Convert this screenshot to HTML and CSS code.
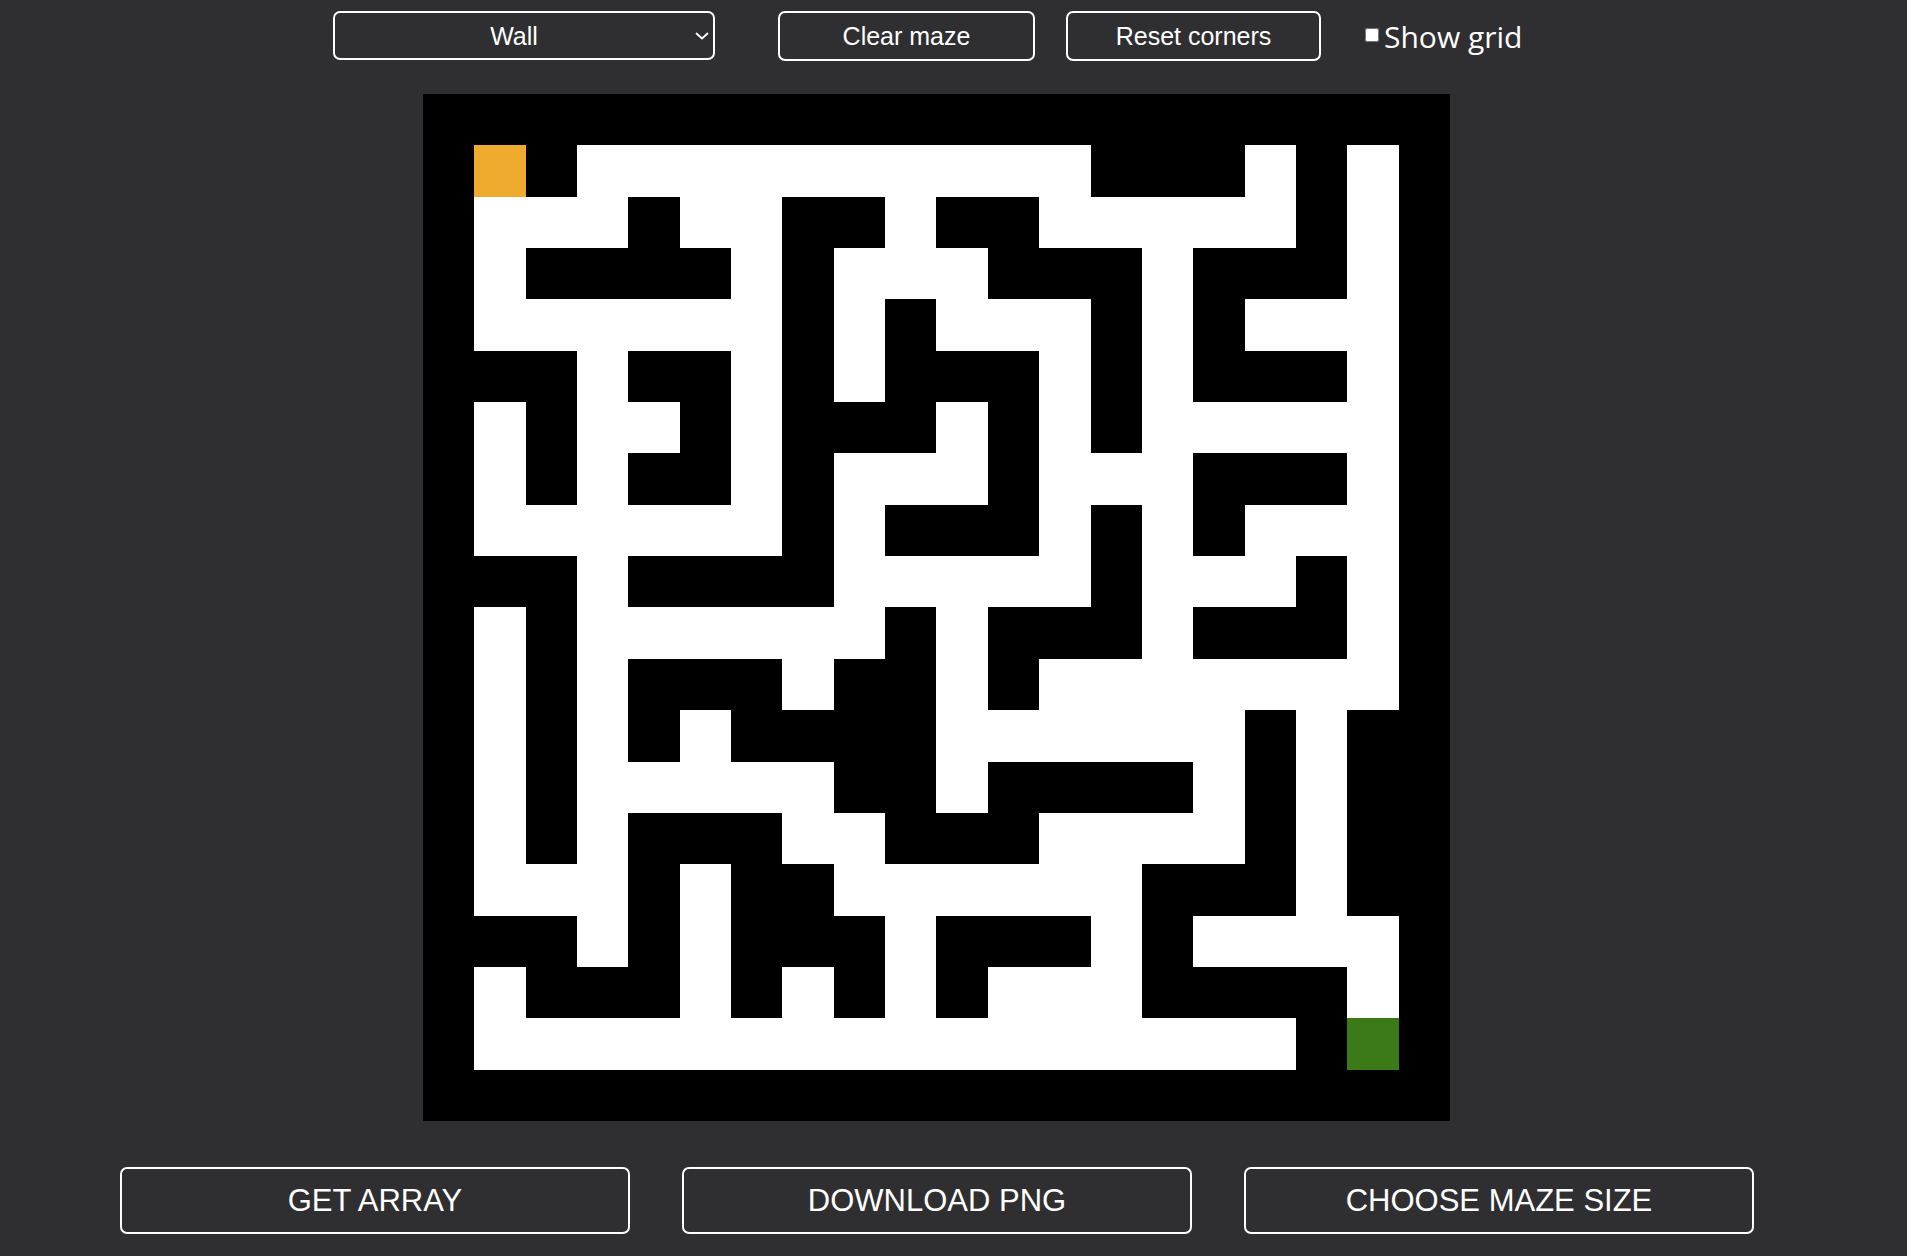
FILE: index.html
```html
<!DOCTYPE html>
<html lang="en">
<head>
<meta charset="utf-8">
<title>Maze editor</title>
<link rel="stylesheet" href="styles.css">
</head>
<body>
<div class="toolbar">
  <div class="select-wrap">
    <select class="mode-select">
      <option>Wall</option>
      <option>Path</option>
      <option>Start</option>
      <option>End</option>
    </select>
    <svg class="select-arrow" width="14" height="8" viewBox="0 0 14 8" aria-hidden="true"><path d="M1.5 1.5 L7 6.5 L12.5 1.5" fill="none" stroke="#ffffff" stroke-width="1.8" stroke-linecap="round" stroke-linejoin="round"/></svg>
  </div>
  <button class="top-btn clear-btn">Clear maze</button>
  <button class="top-btn reset-btn">Reset corners</button>
  <label class="grid-toggle"><input type="checkbox" class="grid-check">Show grid</label>
</div>

<div class="maze">
  <!-- row 0 -->
  <i class="w"></i><i class="w"></i><i class="w"></i><i class="w"></i><i class="w"></i><i class="w"></i><i class="w"></i><i class="w"></i><i class="w"></i><i class="w"></i><i class="w"></i><i class="w"></i><i class="w"></i><i class="w"></i><i class="w"></i><i class="w"></i><i class="w"></i><i class="w"></i><i class="w"></i><i class="w"></i>
  <!-- row 1 -->
  <i class="w"></i><i class="s"></i><i class="w"></i><i class="p"></i><i class="p"></i><i class="p"></i><i class="p"></i><i class="p"></i><i class="p"></i><i class="p"></i><i class="p"></i><i class="p"></i><i class="p"></i><i class="w"></i><i class="w"></i><i class="w"></i><i class="p"></i><i class="w"></i><i class="p"></i><i class="w"></i>
  <!-- row 2 -->
  <i class="w"></i><i class="p"></i><i class="p"></i><i class="p"></i><i class="w"></i><i class="p"></i><i class="p"></i><i class="w"></i><i class="w"></i><i class="p"></i><i class="w"></i><i class="w"></i><i class="p"></i><i class="p"></i><i class="p"></i><i class="p"></i><i class="p"></i><i class="w"></i><i class="p"></i><i class="w"></i>
  <!-- row 3 -->
  <i class="w"></i><i class="p"></i><i class="w"></i><i class="w"></i><i class="w"></i><i class="w"></i><i class="p"></i><i class="w"></i><i class="p"></i><i class="p"></i><i class="p"></i><i class="w"></i><i class="w"></i><i class="w"></i><i class="p"></i><i class="w"></i><i class="w"></i><i class="w"></i><i class="p"></i><i class="w"></i>
  <!-- row 4 -->
  <i class="w"></i><i class="p"></i><i class="p"></i><i class="p"></i><i class="p"></i><i class="p"></i><i class="p"></i><i class="w"></i><i class="p"></i><i class="w"></i><i class="p"></i><i class="p"></i><i class="p"></i><i class="w"></i><i class="p"></i><i class="w"></i><i class="p"></i><i class="p"></i><i class="p"></i><i class="w"></i>
  <!-- row 5 -->
  <i class="w"></i><i class="w"></i><i class="w"></i><i class="p"></i><i class="w"></i><i class="w"></i><i class="p"></i><i class="w"></i><i class="p"></i><i class="w"></i><i class="w"></i><i class="w"></i><i class="p"></i><i class="w"></i><i class="p"></i><i class="w"></i><i class="w"></i><i class="w"></i><i class="p"></i><i class="w"></i>
  <!-- row 6 -->
  <i class="w"></i><i class="p"></i><i class="w"></i><i class="p"></i><i class="p"></i><i class="w"></i><i class="p"></i><i class="w"></i><i class="w"></i><i class="w"></i><i class="p"></i><i class="w"></i><i class="p"></i><i class="w"></i><i class="p"></i><i class="p"></i><i class="p"></i><i class="p"></i><i class="p"></i><i class="w"></i>
  <!-- row 7 -->
  <i class="w"></i><i class="p"></i><i class="w"></i><i class="p"></i><i class="w"></i><i class="w"></i><i class="p"></i><i class="w"></i><i class="p"></i><i class="p"></i><i class="p"></i><i class="w"></i><i class="p"></i><i class="p"></i><i class="p"></i><i class="w"></i><i class="w"></i><i class="w"></i><i class="p"></i><i class="w"></i>
  <!-- row 8 -->
  <i class="w"></i><i class="p"></i><i class="p"></i><i class="p"></i><i class="p"></i><i class="p"></i><i class="p"></i><i class="w"></i><i class="p"></i><i class="w"></i><i class="w"></i><i class="w"></i><i class="p"></i><i class="w"></i><i class="p"></i><i class="w"></i><i class="p"></i><i class="p"></i><i class="p"></i><i class="w"></i>
  <!-- row 9 -->
  <i class="w"></i><i class="w"></i><i class="w"></i><i class="p"></i><i class="w"></i><i class="w"></i><i class="w"></i><i class="w"></i><i class="p"></i><i class="p"></i><i class="p"></i><i class="p"></i><i class="p"></i><i class="w"></i><i class="p"></i><i class="p"></i><i class="p"></i><i class="w"></i><i class="p"></i><i class="w"></i>
  <!-- row 10 -->
  <i class="w"></i><i class="p"></i><i class="w"></i><i class="p"></i><i class="p"></i><i class="p"></i><i class="p"></i><i class="p"></i><i class="p"></i><i class="w"></i><i class="p"></i><i class="w"></i><i class="w"></i><i class="w"></i><i class="p"></i><i class="w"></i><i class="w"></i><i class="w"></i><i class="p"></i><i class="w"></i>
  <!-- row 11 -->
  <i class="w"></i><i class="p"></i><i class="w"></i><i class="p"></i><i class="w"></i><i class="w"></i><i class="w"></i><i class="p"></i><i class="w"></i><i class="w"></i><i class="p"></i><i class="w"></i><i class="p"></i><i class="p"></i><i class="p"></i><i class="p"></i><i class="p"></i><i class="p"></i><i class="p"></i><i class="w"></i>
  <!-- row 12 -->
  <i class="w"></i><i class="p"></i><i class="w"></i><i class="p"></i><i class="w"></i><i class="p"></i><i class="w"></i><i class="w"></i><i class="w"></i><i class="w"></i><i class="p"></i><i class="p"></i><i class="p"></i><i class="p"></i><i class="p"></i><i class="p"></i><i class="w"></i><i class="p"></i><i class="w"></i><i class="w"></i>
  <!-- row 13 -->
  <i class="w"></i><i class="p"></i><i class="w"></i><i class="p"></i><i class="p"></i><i class="p"></i><i class="p"></i><i class="p"></i><i class="w"></i><i class="w"></i><i class="p"></i><i class="w"></i><i class="w"></i><i class="w"></i><i class="w"></i><i class="p"></i><i class="w"></i><i class="p"></i><i class="w"></i><i class="w"></i>
  <!-- row 14 -->
  <i class="w"></i><i class="p"></i><i class="w"></i><i class="p"></i><i class="w"></i><i class="w"></i><i class="w"></i><i class="p"></i><i class="p"></i><i class="w"></i><i class="w"></i><i class="w"></i><i class="p"></i><i class="p"></i><i class="p"></i><i class="p"></i><i class="w"></i><i class="p"></i><i class="w"></i><i class="w"></i>
  <!-- row 15 -->
  <i class="w"></i><i class="p"></i><i class="p"></i><i class="p"></i><i class="w"></i><i class="p"></i><i class="w"></i><i class="w"></i><i class="p"></i><i class="p"></i><i class="p"></i><i class="p"></i><i class="p"></i><i class="p"></i><i class="w"></i><i class="w"></i><i class="w"></i><i class="p"></i><i class="w"></i><i class="w"></i>
  <!-- row 16 -->
  <i class="w"></i><i class="w"></i><i class="w"></i><i class="p"></i><i class="w"></i><i class="p"></i><i class="w"></i><i class="w"></i><i class="w"></i><i class="p"></i><i class="w"></i><i class="w"></i><i class="w"></i><i class="p"></i><i class="w"></i><i class="p"></i><i class="p"></i><i class="p"></i><i class="p"></i><i class="w"></i>
  <!-- row 17 -->
  <i class="w"></i><i class="p"></i><i class="w"></i><i class="w"></i><i class="w"></i><i class="p"></i><i class="w"></i><i class="p"></i><i class="w"></i><i class="p"></i><i class="w"></i><i class="p"></i><i class="p"></i><i class="p"></i><i class="w"></i><i class="w"></i><i class="w"></i><i class="w"></i><i class="p"></i><i class="w"></i>
  <!-- row 18 -->
  <i class="w"></i><i class="p"></i><i class="p"></i><i class="p"></i><i class="p"></i><i class="p"></i><i class="p"></i><i class="p"></i><i class="p"></i><i class="p"></i><i class="p"></i><i class="p"></i><i class="p"></i><i class="p"></i><i class="p"></i><i class="p"></i><i class="p"></i><i class="w"></i><i class="e"></i><i class="w"></i>
  <!-- row 19 -->
  <i class="w"></i><i class="w"></i><i class="w"></i><i class="w"></i><i class="w"></i><i class="w"></i><i class="w"></i><i class="w"></i><i class="w"></i><i class="w"></i><i class="w"></i><i class="w"></i><i class="w"></i><i class="w"></i><i class="w"></i><i class="w"></i><i class="w"></i><i class="w"></i><i class="w"></i><i class="w"></i>
</div>

<div class="actions">
  <button class="big-btn">GET ARRAY</button>
  <button class="big-btn">DOWNLOAD PNG</button>
  <button class="big-btn">CHOOSE MAZE SIZE</button>
</div>
</body>
</html>
```

FILE: styles.css
```css
html, body {
  margin: 0;
  padding: 0;
  background: #2f2f31;
  color: #ffffff;
  font-family: "Liberation Sans", Arial, sans-serif;
}

.toolbar {
  display: flex;
  align-items: flex-start;
  padding: 11px 0 0 333px;
  height: 50px;
}

.select-wrap {
  position: relative;
  width: 382px;
  height: 49px;
}

.mode-select {
  -webkit-appearance: none;
  appearance: none;
  box-sizing: border-box;
  width: 382px;
  height: 49px;
  border: 2px solid #ffffff;
  border-radius: 7px;
  background-color: #2f2f31;
  color: #ffffff;
  font-family: "Liberation Sans", Arial, sans-serif;
  font-size: 25px;
  text-align: center;
  text-align-last: center;
  padding: 0 20px 0 0;
  margin: 0;
}

.select-arrow {
  position: absolute;
  right: 6px;
  top: 21px;
  pointer-events: none;
}

.top-btn {
  box-sizing: border-box;
  height: 50px;
  border: 2px solid #ffffff;
  border-radius: 7px;
  background: transparent;
  color: #ffffff;
  font-family: "Liberation Sans", Arial, sans-serif;
  font-size: 25px;
  padding: 0;
  margin: 0;
}

.clear-btn {
  width: 257px;
  margin-left: 63px;
}

.reset-btn {
  width: 255px;
  margin-left: 31px;
}

.grid-toggle {
  display: flex;
  align-items: center;
  height: 50px;
  margin-left: 40px;
  font-family: "Open Sans", "Noto Sans", sans-serif;
  font-size: 30px;
  color: #ffffff;
}

.grid-check {
  width: 14px;
  height: 14px;
  margin: 0 5px 0 4px;
  position: relative;
  top: -1px;
}

.maze {
  display: grid;
  grid-template-columns: repeat(20, 1fr);
  grid-template-rows: repeat(20, 1fr);
  width: 1027px;
  height: 1027px;
  margin: 33px 0 0 423px;
  background: #000000;
}

.maze i {
  display: block;
}

.maze .w {
  background: #000000;
}

.maze .p {
  background: #ffffff;
}

.maze .s {
  background: #eeab2e;
}

.maze .e {
  background: #3c7a18;
}

.actions {
  display: flex;
  gap: 52px;
  padding: 46px 0 0 120px;
}

.big-btn {
  box-sizing: border-box;
  width: 510px;
  height: 67px;
  border: 2px solid #ffffff;
  border-radius: 7px;
  background: transparent;
  color: #ffffff;
  font-family: "Liberation Sans", Arial, sans-serif;
  font-size: 31px;
  padding: 0;
  margin: 0;
}
```
